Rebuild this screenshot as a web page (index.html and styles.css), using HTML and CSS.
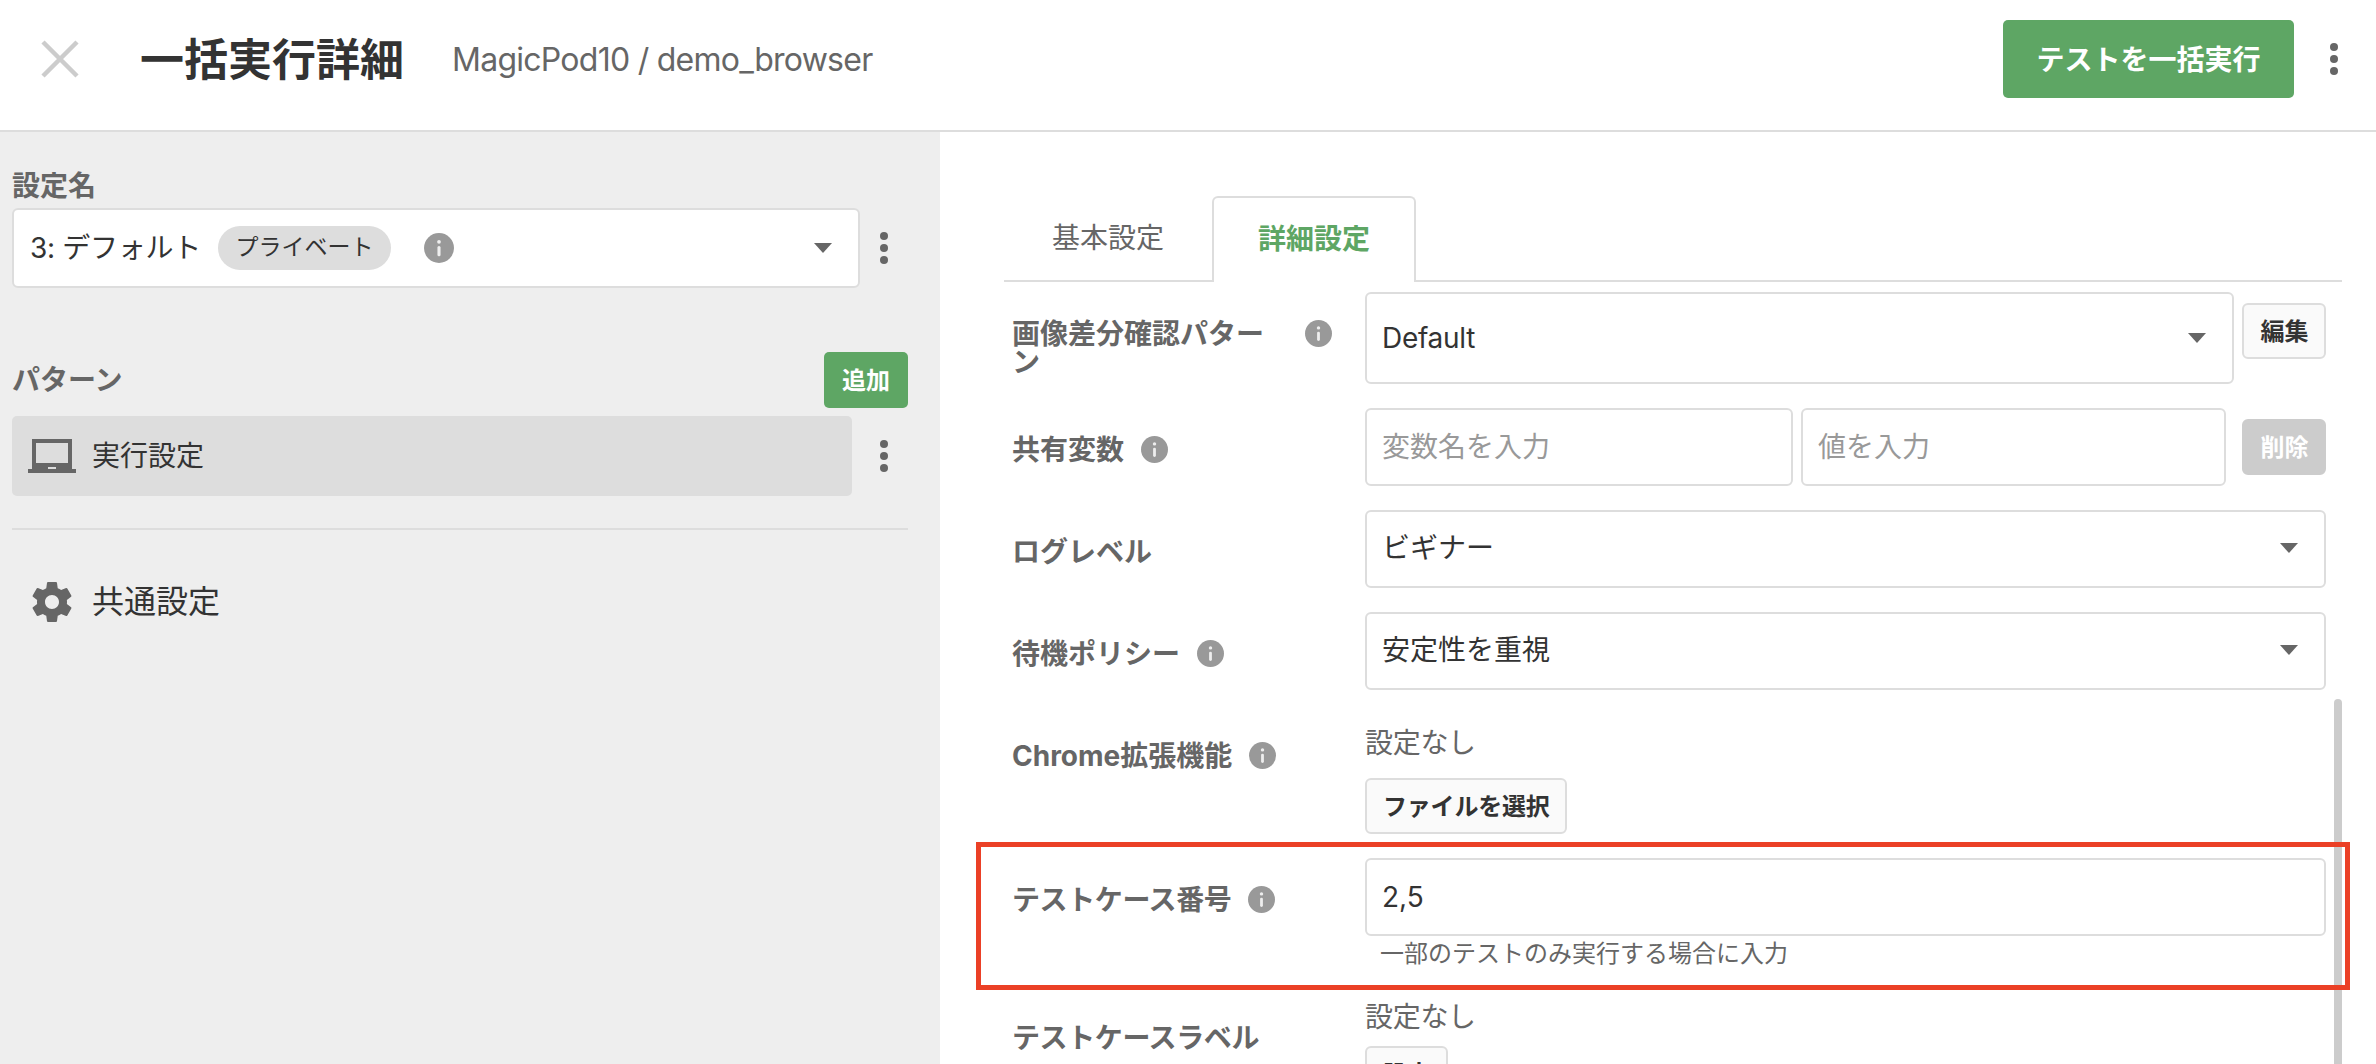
FILE: index.html
```html
<!DOCTYPE html>
<html lang="ja">
<head>
    <meta charset="UTF-8">
    <meta name="viewport" content="width=device-width, initial-scale=1.0">
    <title>一括実行詳細</title>
    <link rel="stylesheet" href="styles.css">
</head>
<body>
    <svg class="icon-defs" width="0" height="0">
        <symbol id="icon-info" viewBox="0 0 24 24">
            <path d="M12 0a12 12 0 1 0 0 24a12 12 0 0 0 0-24z" fill="#999"/>
            <circle cx="12" cy="7" r="1.5" fill="#eee"/>
            <path d="M12 11.6v5.8" stroke="#eee" stroke-width="2.5" stroke-linecap="round"/>
        </symbol>
        <symbol id="icon-arrow" viewBox="0 0 18 10">
            <path d="M0 0h18l-9 10z" fill="#666"/>
        </symbol>
        <symbol id="icon-dots" viewBox="0 0 8 32">
            <g fill="#666">
                <circle cx="4" cy="4" r="4"/>
                <circle cx="4" cy="16" r="4"/>
                <circle cx="4" cy="28" r="4"/>
            </g>
        </symbol>
    </svg>

    <div class="app">
        <header class="header">
            <svg class="close-icon" viewBox="0 0 38 38"><path d="M2 2l34 34M36 2L2 36" stroke="#ccc" stroke-width="4.5"/></svg>
            <h1 class="title">一括実行詳細</h1>
            <span class="project">MagicPod10 / demo_browser</span>
            <button class="run-button">テストを一括実行</button>
            <svg class="dots"><use href="#icon-dots"/></svg>
        </header>

        <div class="main">
            <aside class="sidebar">
                <div class="side-label">設定名</div>
                <div class="side-row">
                    <div class="select setting-select">
                        <span class="setting-name">3: デフォルト</span>
                        <span class="pill">プライベート</span>
                        <svg class="info info-large"><use href="#icon-info"/></svg>
                        <svg class="arrow"><use href="#icon-arrow"/></svg>
                    </div>
                    <svg class="dots"><use href="#icon-dots"/></svg>
                </div>

                <div class="pattern-header">
                    <span class="side-label">パターン</span>
                    <button class="add-button">追加</button>
                </div>
                <div class="side-row">
                    <div class="pattern">
                        <svg class="laptop-icon" viewBox="0 0 48 34">
                            <path fill="#666" fill-rule="evenodd" d="M4 0h40v30h4v4H0v-4h4zM8 4v20h32V4zM20 28v2h8v-2z"/>
                        </svg>
                        <span>実行設定</span>
                    </div>
                    <svg class="dots"><use href="#icon-dots"/></svg>
                </div>

                <div class="divider"></div>
                <div class="common">
                    <svg class="gear-icon" viewBox="2 2 20 20">
                        <path fill="#666" d="M19.43 12.98c.04-.32.07-.64.07-.98s-.03-.66-.07-.98l2.11-1.65c.19-.15.24-.42.12-.64l-2-3.46c-.12-.22-.39-.3-.61-.22l-2.49 1c-.52-.4-1.08-.73-1.69-.98l-.38-2.65C14.46 2.18 14.25 2 14 2h-4c-.25 0-.46.18-.49.42l-.38 2.65c-.61.25-1.17.59-1.69.98l-2.49-1c-.23-.09-.49 0-.61.22l-2 3.46c-.13.22-.07.49.12.64l2.11 1.65c-.04.32-.07.65-.07.98s.03.66.07.98l-2.11 1.65c-.19.15-.24.42-.12.64l2 3.46c.12.22.39.3.61.22l2.49-1c.52.4 1.08.73 1.69.98l.38 2.65c.03.24.24.42.49.42h4c.25 0 .46-.18.49-.42l.38-2.65c.61-.25 1.17-.59 1.69-.98l2.49 1c.23.09.49 0 .61-.22l2-3.46c.12-.22.07-.49-.12-.64l-2.11-1.65zM12 15.5c-1.93 0-3.5-1.57-3.5-3.5s1.57-3.5 3.5-3.5 3.5 1.57 3.5 3.5-1.57 3.5-3.5 3.5z"/>
                    </svg>
                    <span>共通設定</span>
                </div>
            </aside>

            <section class="content">
                <div class="tabs">
                    <div class="tab">基本設定</div>
                    <div class="tab active">詳細設定</div>
                </div>

                <div class="form">
                    <div class="row row-diff">
                        <div class="label label-wrap"><span>画像差分確認パターン</span><svg class="info"><use href="#icon-info"/></svg></div>
                        <div class="select tall"><span>Default</span><svg class="arrow"><use href="#icon-arrow"/></svg></div>
                        <button class="button edit-button">編集</button>
                    </div>
                    <div class="row">
                        <div class="label"><span>共有変数</span><svg class="info"><use href="#icon-info"/></svg></div>
                        <input class="input name-input" type="text" placeholder="変数名を入力">
                        <input class="input value-input" type="text" placeholder="値を入力">
                        <button class="button delete-button" disabled>削除</button>
                    </div>
                    <div class="row">
                        <div class="label"><span>ログレベル</span></div>
                        <div class="select"><span>ビギナー</span><svg class="arrow"><use href="#icon-arrow"/></svg></div>
                    </div>
                    <div class="row">
                        <div class="label"><span>待機ポリシー</span><svg class="info"><use href="#icon-info"/></svg></div>
                        <div class="select"><span>安定性を重視</span><svg class="arrow"><use href="#icon-arrow"/></svg></div>
                    </div>
                    <div class="row row-chrome">
                        <div class="label"><span>Chrome拡張機能</span><svg class="info"><use href="#icon-info"/></svg></div>
                        <div class="field">
                            <div class="none">設定なし</div>
                            <button class="button">ファイルを選択</button>
                        </div>
                    </div>
                    <div class="row row-number">
                        <div class="label"><span>テストケース番号</span><svg class="info"><use href="#icon-info"/></svg></div>
                        <div class="field">
                            <input class="input" type="text" value="2,5">
                            <div class="help">一部のテストのみ実行する場合に入力</div>
                        </div>
                        <div class="highlight"></div>
                    </div>
                    <div class="row row-label">
                        <div class="label"><span>テストケースラベル</span></div>
                        <div class="field">
                            <div class="none">設定なし</div>
                            <button class="button">設定</button>
                        </div>
                    </div>
                </div>
                <div class="scrollbar"></div>
            </section>
        </div>
    </div>
</body>
</html>
```
FILE: styles.css
```css
/* Reset and Base Styles */
* {
    box-sizing: border-box;
}

body {
    margin: 0;
    font-family: 'Inter', 'Noto Sans CJK JP', sans-serif;
    font-size: 28px;
    line-height: 28px;
    color: #333;
    background-color: #fff;
}

button, input {
    font-family: inherit;
    margin: 0;
}

svg {
    display: block;
    flex-shrink: 0;
}

.icon-defs {
    position: absolute;
}

.app {
    display: flex;
    flex-direction: column;
    height: 100vh;
    overflow: hidden;
}

/* Header */
.header {
    display: flex;
    align-items: center;
    flex-shrink: 0;
    height: 132px;
    padding: 0 38px 12px 41px;
    border-bottom: 2px solid #ddd;
}

.close-icon {
    width: 38px;
    height: 38px;
}

.title {
    margin: 0 0 0 61px;
    padding-top: 2px;
    font-size: 44px;
    line-height: 44px;
}

.project {
    margin-left: 48px;
    padding-top: 2px;
    font-size: 32px;
    line-height: 32px;
    letter-spacing: -0.74px;
    color: #666;
}

.run-button {
    width: 291px;
    height: 78px;
    margin-left: auto;
    padding: 0 0 3px;
    border: none;
    border-radius: 5px;
    background-color: #5ea664;
    color: #fff;
    font-size: 28px;
    font-weight: bold;
}

.dots {
    width: 8px;
    height: 32px;
}

.header .dots {
    margin-left: 36px;
}

.main {
    display: flex;
    flex: 1;
    min-height: 0;
}

/* Sidebar */
.sidebar {
    width: 940px;
    padding: 40px 32px 0 12px;
    background-color: #eee;
}

.side-label {
    font-weight: bold;
    color: #666;
}

.side-row {
    display: flex;
    align-items: center;
    justify-content: space-between;
    margin-top: 8px;
    padding-right: 20px;
}

.select {
    display: flex;
    align-items: center;
    justify-content: space-between;
    width: 961px;
    height: 78px;
    padding: 0 26px 2px 15px;
    border: 2px solid #ddd;
    border-radius: 6px;
    background-color: #fff;
}

.arrow {
    width: 18px;
    height: 10px;
}

.select.setting-select {
    justify-content: flex-start;
    width: 848px;
    height: 80px;
    padding: 0 26px 0 16px;
}

.setting-name {
    width: 170px;
    letter-spacing: -0.3px;
    white-space: nowrap;
}

.setting-select .arrow {
    margin-left: auto;
}

.pill {
    width: 173px;
    height: 44px;
    margin-left: 18px;
    border-radius: 22px;
    background-color: #ddd;
    font-size: 23px;
    line-height: 43px;
    text-align: center;
}

.info {
    width: 27px;
    height: 27px;
}

.info-large {
    width: 30px;
    height: 30px;
    margin-left: 33px;
}

.pattern-header {
    display: flex;
    align-items: center;
    justify-content: space-between;
    margin-top: 64px;
}

.add-button {
    width: 84px;
    height: 56px;
    padding: 0 0 3px;
    border: none;
    border-radius: 5px;
    background-color: #5ea664;
    color: #fff;
    font-size: 24px;
    font-weight: bold;
}

.pattern {
    display: flex;
    align-items: center;
    width: 840px;
    height: 80px;
    padding-left: 16px;
    border-radius: 5px;
    background-color: #ddd;
}

.laptop-icon {
    width: 48px;
    height: 34px;
    margin-right: 16px;
}

.divider {
    height: 2px;
    margin-top: 32px;
    background-color: #ddd;
}

.common {
    display: flex;
    align-items: center;
    margin-top: 52px;
    padding-left: 20px;
    font-size: 32px;
    line-height: 40px;
}

.gear-icon {
    width: 40px;
    height: 40px;
    margin-right: 20px;
}

/* Content */
.content {
    position: relative;
    flex: 1;
    padding: 64px 34px 0 64px;
}

.tabs {
    display: flex;
    height: 86px;
    border-bottom: 2px solid #ddd;
}

.tab {
    width: 208px;
    padding-top: 28px;
    text-align: center;
    color: #666;
}

.tab.active {
    width: 204px;
    height: 86px;
    padding-top: 27px;
    border: 2px solid #ddd;
    border-bottom: none;
    border-radius: 6px 6px 0 0;
    background-color: #fff;
    font-weight: bold;
    color: #5ea664;
}

/* Settings form */
.form {
    padding: 10px 0 0 8px;
}

.row {
    display: flex;
    position: relative;
    height: 102px;
}

.row-diff {
    height: 116px;
}

.row-chrome {
    height: 144px;
}

.row-number {
    height: 146px;
}

.label {
    display: flex;
    flex-shrink: 0;
    align-items: flex-start;
    width: 353px;
    padding-top: 28px;
    font-weight: bold;
    color: #666;
}

.label .info {
    margin-left: 17px;
}

.label-wrap {
    justify-content: space-between;
    padding-right: 33px;
}

.label-wrap span {
    width: 262px;
}

.row-number .label,
.row-label .label {
    letter-spacing: -0.4px;
}

.select.tall {
    width: 869px;
    height: 92px;
    padding-bottom: 0;
    letter-spacing: -0.3px;
}

.input {
    display: block;
    width: 961px;
    height: 78px;
    padding: 0 15px;
    border: 2px solid #ddd;
    border-radius: 6px;
    outline: none;
    background-color: #fff;
    color: #333;
    font-size: 28px;
}

.input::placeholder {
    color: #999;
}

.name-input {
    width: 428px;
}

.value-input {
    width: 425px;
    margin-left: 8px;
}

.button {
    height: 56px;
    padding: 0 15px 3px 16px;
    border: 2px solid #ddd;
    border-radius: 6px;
    background-color: #fafafa;
    color: #333;
    font-size: 24px;
    font-weight: bold;
}

.row-chrome .button {
    letter-spacing: -0.2px;
}

.edit-button {
    width: 84px;
    margin: 11px 0 0 8px;
}

.delete-button {
    width: 84px;
    margin: 11px 0 0 16px;
    border-color: #ccc;
    background-color: #ccc;
    color: #fff;
}

.none {
    letter-spacing: -0.3px;
    color: #666;
}

.row-chrome .none {
    padding: 15px 0 21px;
}

.row-label .none {
    margin-top: -1px;
    padding-bottom: 15px;
}

.row-label .label {
    padding-top: 20px;
}

.help {
    margin-top: 4px;
    padding-left: 15px;
    font-size: 24px;
    color: #666;
}

/* Red frame around the test case number */
.highlight {
    position: absolute;
    top: -16px;
    left: -36px;
    width: 1374px;
    height: 148px;
    border: 5px solid #eb4026;
    z-index: 2;
}

.scrollbar {
    position: absolute;
    top: 567px;
    right: 34px;
    bottom: 0;
    width: 8px;
    border-radius: 4px 4px 0 0;
    background-color: #ccc;
}
```
